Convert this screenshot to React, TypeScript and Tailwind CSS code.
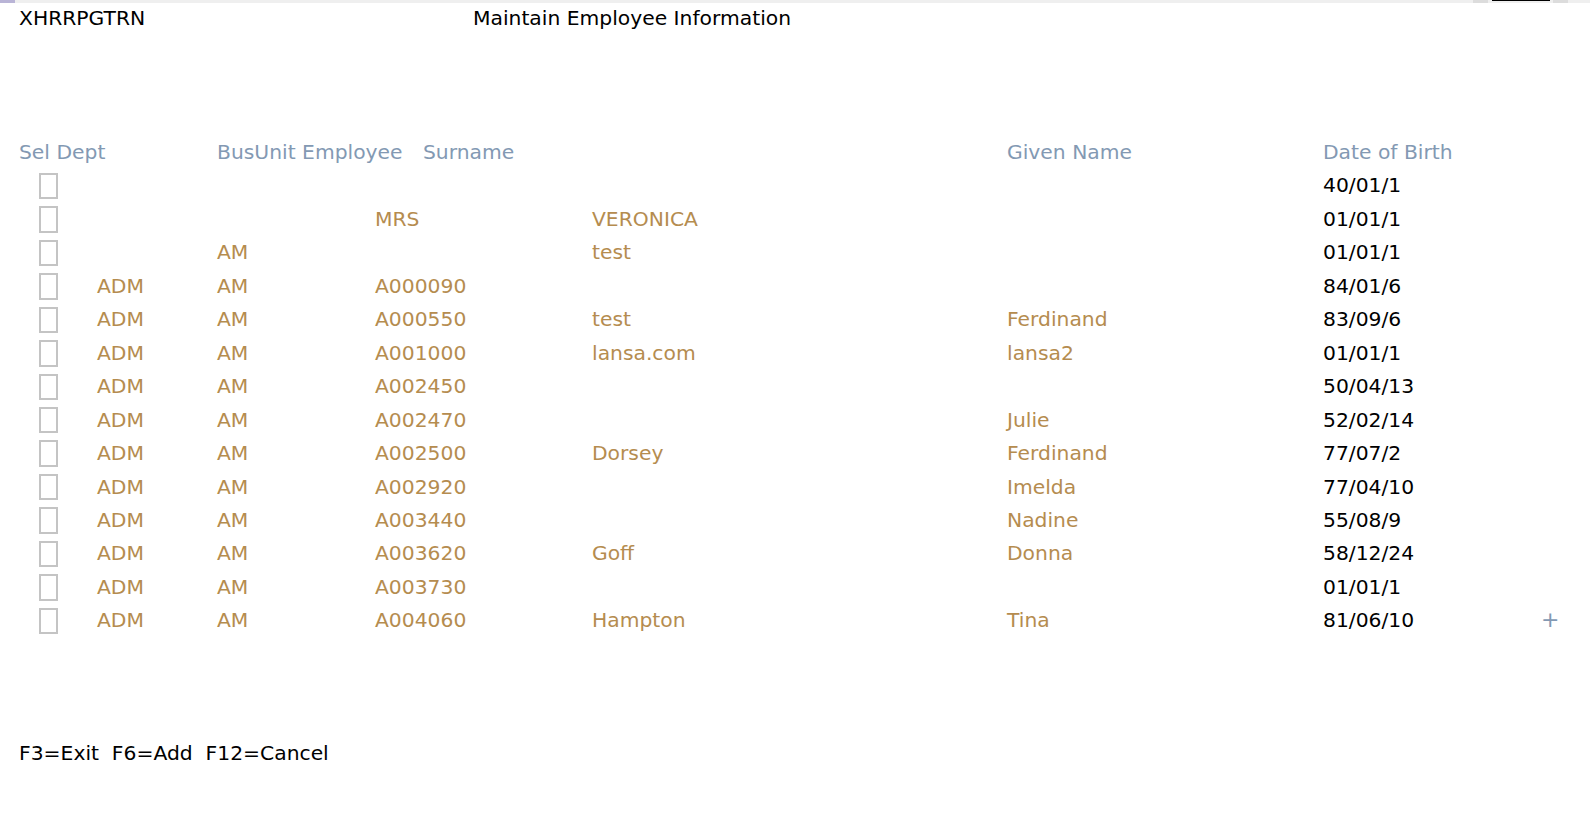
import React from 'react';

type Row = {
  dept: string;
  unit: string;
  emp: string;
  surname: string;
  given: string;
  dob: string;
};

const rows: Row[] = [
  { dept: '', unit: '', emp: '', surname: '', given: '', dob: '40/01/1' },
  { dept: '', unit: '', emp: 'MRS', surname: 'VERONICA', given: '', dob: '01/01/1' },
  { dept: '', unit: 'AM', emp: '', surname: 'test', given: '', dob: '01/01/1' },
  { dept: 'ADM', unit: 'AM', emp: 'A000090', surname: '', given: '', dob: '84/01/6' },
  { dept: 'ADM', unit: 'AM', emp: 'A000550', surname: 'test', given: 'Ferdinand', dob: '83/09/6' },
  { dept: 'ADM', unit: 'AM', emp: 'A001000', surname: 'lansa.com', given: 'lansa2', dob: '01/01/1' },
  { dept: 'ADM', unit: 'AM', emp: 'A002450', surname: '', given: '', dob: '50/04/13' },
  { dept: 'ADM', unit: 'AM', emp: 'A002470', surname: '', given: 'Julie', dob: '52/02/14' },
  { dept: 'ADM', unit: 'AM', emp: 'A002500', surname: 'Dorsey', given: 'Ferdinand', dob: '77/07/2' },
  { dept: 'ADM', unit: 'AM', emp: 'A002920', surname: '', given: 'Imelda', dob: '77/04/10' },
  { dept: 'ADM', unit: 'AM', emp: 'A003440', surname: '', given: 'Nadine', dob: '55/08/9' },
  { dept: 'ADM', unit: 'AM', emp: 'A003620', surname: 'Goff', given: 'Donna', dob: '58/12/24' },
  { dept: 'ADM', unit: 'AM', emp: 'A003730', surname: '', given: '', dob: '01/01/1' },
  { dept: 'ADM', unit: 'AM', emp: 'A004060', surname: 'Hampton', given: 'Tina', dob: '81/06/10' },
];

export default function App() {
  return (
    <div
      className="w-[1590px] h-[823px] bg-white text-black text-[20.3px] leading-none overflow-hidden"
      style={{ fontFamily: '"DejaVu Sans", Verdana, sans-serif' }}
    >
      {/* top strip */}
      <div className="h-[3px] bg-[#efefef] flex">
        <div className="w-[15px] bg-[#b9b4d6]" />
        <div className="flex-1" />
        <div className="w-[15px] bg-[#dcdcdc] mr-[4px]" />
        <div className="w-[58px] h-[1px] bg-black mr-[3px]" />
        <div className="w-[15px] bg-[#dcdcdc] mr-[22px]" />
      </div>

      {/* title line */}
      <div className="flex items-center h-[31px] pl-[19px]">
        <div className="w-[454px]">XHRRPGTRN</div>
        <div>Maintain Employee Information</div>
      </div>

      {/* column headings */}
      <div className="mt-[101.4px] flex items-center h-[33.46px] pl-[19px] text-[#8399b3]">
        <div className="w-[198px]">Sel Dept</div>
        <div className="w-[206px]">BusUnit Employee</div>
        <div className="w-[584px]">Surname</div>
        <div className="w-[316px]">Given Name</div>
        <div>Date of Birth</div>
      </div>

      {/* subfile rows */}
      <div className="flex flex-col">
        {rows.map((r, i) => (
          <div key={i} className="flex items-center h-[33.46px] pl-[19px] text-[#b58c4f]">
            <div className="w-[78px] pl-[19.5px] flex items-center">
              <span className="block w-[19.5px] h-[26.5px] mt-[1px] border-2 border-[#c4c4c4] bg-white" />
            </div>
            <div className="w-[120px]">{r.dept}</div>
            <div className="w-[158px]">{r.unit}</div>
            <div className="w-[217px]">{r.emp}</div>
            <div className="w-[415px]">{r.surname}</div>
            <div className="w-[316px]">{r.given}</div>
            <div className="w-[218px] text-black">{r.dob}</div>
            {i === rows.length - 1 && <div className="text-[#8399b3] text-[22px]">+</div>}
          </div>
        ))}
      </div>

      {/* function keys */}
      <div className="mt-[99.4px] pl-[19px] h-[33.46px] flex items-center whitespace-pre">
        F3=Exit  F6=Add  F12=Cancel
      </div>
    </div>
  );
}
